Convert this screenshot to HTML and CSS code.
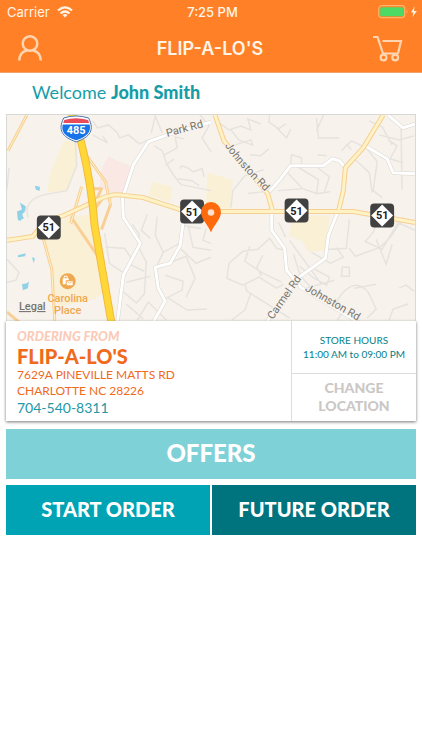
FILE: index.html
```html
<!DOCTYPE html>
<html lang="en">
<head>
<meta charset="utf-8">
<meta name="viewport" content="width=device-width, initial-scale=1">
<title>FLIP-A-LO'S</title>
<link rel="stylesheet" href="styles.css">
</head>
<body>
<header class="top">
  <div class="status">
    <div class="carrier"><span>Carrier</span>
      <svg width="16" height="12" viewBox="0 0 16 12" fill="none" stroke="#fff4e6" stroke-width="2.300"><path d="M1 4.500Q8-1.800 15 4.500M3.500 7.500Q8 3.500 12.500 7.500"/><path d="M5.500 9Q8 7 10.500 9L8 11.500Z" fill="#fff4e6" stroke="none"/></svg>
    </div>
    <span class="time">7:25 PM</span>
    <div class="battery">
      <svg width="40" height="14" viewBox="0 0 40 14"><rect x=".7" y=".7" width="26" height="12" rx="3" fill="none" stroke="#ffb36b" stroke-width="1.200"/><rect x="2.200" y="2.200" width="23" height="9" rx="1.500" fill="#4cd964"/><path d="M28.500 4.500Q30.500 6.700 28.500 9Z" fill="#ffb36b"/><path d="M36.500 1.500L33 7.500H35.500L34.500 12L38.800 6H36Z" fill="#fff4e6"/></svg>
    </div>
  </div>
  <nav class="bar">
    <button class="icon" aria-label="Account"><svg width="26" height="28" viewBox="0 0 26 28" fill="none" stroke="#ffd5b0" stroke-width="2.500"><circle cx="13" cy="9.500" r="7.300"/><path d="M2.200 26.500C2.500 20.500 6 17.300 10 16.500M16 16.500C20 17.300 23.500 20.500 23.800 26.500"/></svg></button>
    <h1>FLIP-A-LO'S</h1>
    <button class="icon" aria-label="Cart"><svg width="30" height="27" viewBox="0 0 30 27" fill="none" stroke="#ffd5b0" stroke-width="2.200"><path d="M0 2H4.500L10 18.500H25M9.500 6H28L25 18.500"/><circle cx="10.500" cy="22.500" r="2.900"/><circle cx="22.200" cy="22.500" r="2.900"/></svg></button>
  </nav>
</header>
<main>
  <p class="welcome">Welcome <strong>John Smith</strong></p>
  <section class="store">
    <svg class="map" viewBox="6 114 410 207" preserveAspectRatio="xMidYMid slice" role="img" aria-label="Store map">
      <defs>
        <g id="shield"><rect x="-12" y="-12" width="24" height="24" rx="4" fill="#414141"/><path d="M0-11L11 0L0 11L-11 0Z" fill="#fff"/><text y="4" text-anchor="middle" class="num">51</text></g>
        <path id="johnston" d="M225 145Q237 164 272 197"/>
      </defs>
      <rect x="6" y="114" width="410" height="207" fill="#f7f3ec"/>
      <g fill="#faf0d6">
        <path d="M63 140L76 141L77 164L66 190L46 192L50 171Z"/>
        <path d="M41 236L66 217L89 214L103 292L94 299L57 307L50 270Z"/>
        <path d="M152 181L172 186L170 201L148 195Z"/>
        <path d="M207 172L233 179L230 208L206 209Z"/>
        <path d="M294 215H330L327 250L309 252L303 241L289 235Z"/>
      </g>
      <path d="M108 156L132 166L121 196L99 187L101 168Z" fill="#fae8e5"/>
      <g fill="#8fd2e8"><path d="M34 185l5 1v4l-4-1z"/><path d="M19 202l6 4-1 5-3 3 2 4-6 2-1-9 5-2z"/><path d="M17 215l4-2 1 4-3 4z"/><path d="M17 255l8-2-1 3-7 1zM31 257l3 1-1 5zM21 284l5-1 2-2-1 7-5 2z"/></g>
      <g class="streets">
        <path d="M92 120L97 127L108 124L117 132L119 137L128 134L139 143L148 139M92 134L107 142L102 135"/>
        <path d="M70 116L75 145L76 165L66 190L44 194Q27 198 26 210L27 217M6 188L8 167M6 259L18 272L15 280L6 282"/>
        <path d="M151 132L155 115L162 132M154 145L162 150L166 162L173 174L181 184L211 190M164 154L177 147L175 136L184 138M181 168Q179 163 187 167L193 171L202 168L204 176M178 178L192 180L199 185M200 114L209 125L202 137L211 151M165 165L174 158"/>
        <path d="M218 121L229 129L241 125L251 129L248 118L261 123M231 129L239 139L252 144M270 114L269 121L279 128L286 123M229 146L251 139L253 145M250 154L261 155L269 148M277 127L287 137L291 128M317 117L319 137L340 137M324 114L317 130M231 207L233 190L245 175L264 169M248 193L264 191"/>
        <path d="M291 164L292 154L302 157L302 164M288 172L303 188L318 193L331 191M296 165L319 179L317 194M318 154L327 155M318 167L330 176L325 191M278 190L302 188M342 150L352 140L367 147L378 161L374 190L383 197M355 158L370 172L373 192M389 139L398 145L391 158L404 162M402 128L403 189M380 134L400 139L415 135M370 120L383 126L393 144M352 149L347 143"/>
        <path d="M104 233L109 263L122 272M132 224L139 234L137 248M147 214L141 230L150 238M157 216L155 235L163 252L181 242M182 225L201 228M163 252L157 265M139 248L146 262L144 294L136 303L122 291M105 247L124 248L131 258M129 264L144 271M126 282L150 276M166 264L186 256L195 278L186 297M181 249L196 263L211 257M165 275L183 281L182 290L164 299M168 298L187 310L207 309M137 320L148 302L166 320M126 304L143 319M188 225L193 247L211 250M206 228L203 240L211 243M192 220L203 218"/>
        <path d="M243 251L229 263L227 278L243 285L259 277L277 288L284 284M243 251L258 249L270 238L277 248L285 250M250 246L245 261L263 273L282 282M263 255L257 267L262 276M245 283L247 291L290 318M251 293L245 310L232 320M290 240L303 258L322 284M286 237L279 222M294 254L301 276L314 290M300 266L313 277L327 285L330 277L315 269M307 288L335 280M312 252L331 263L344 257L337 247M343 267L350 267V276H342zM350 219L347 248L329 249M350 248L356 256L381 247L392 236L404 217M379 218L374 232L366 241L383 249L399 222L416 230M377 239L387 264L393 244M356 320L339 309L338 300Q354 275 369 292L377 309L368 318M355 288L377 284M338 320L346 308M390 320L394 309L409 304M400 288L407 285L415 291"/>
      </g>
      <g class="casing orange"><path d="M84 152L105 181L110 204L101 229M81 186L70 223M91 188H101L94 203M70 216L100 260"/><path d="M26 114L7 150M41 233L51 269L54 321M6 312L18 322M93 210L102 198"/></g>
      <g class="core yellow"><path d="M84 152L105 181L110 204M81 186L70 223M26 114L7 150M41 233L51 269L54 321"/></g>
      <g class="casing white"><path d="M211 121L167 134L148 141L133 164L122 198L123 217L140 243L123 275L120 298L117 322M183 222L180 245L170 263L155 267L158 288L165 301L153 322M272 208V230L285 248L287 270L301 287L362 324M339 210L329 235L326 258L298 278L267 322M268 193L281 178L291 165L324 165L333 158L340 160L346 167M366 145L388 158L394 172L416 173M389 114L404 127L416 123"/></g>
      <g class="core white-core"><path d="M211 121L167 134L148 141L133 164L122 198L123 217L140 243L123 275L120 298L117 322M183 222L180 245L170 263L155 267L158 288L165 301L153 322M272 208V230L285 248L287 270L301 287L362 324M339 210L329 235L326 258L298 278L267 322M268 193L281 178L291 165L324 165L333 158L340 160L346 167M366 145L388 158L394 172L416 173M389 114L404 127L416 123"/></g>
      <path class="artery-edge" d="M6 240L32 236L43 222L63 215L98 199Q112 192 125 195L143 197L180 209L211 211H354L416 222M215 114L224 140L268 193L273 211M384 114L364 147L346 167L344 190L339 211"/>
      <path class="artery" d="M6 240L32 236L43 222L63 215L98 199Q112 192 125 195L143 197L180 209L211 211H354L416 222M215 114L224 140L268 193L273 211M384 114L364 147L346 167L344 190L339 211"/>
      <path class="freeway-edge" d="M71 112L81 143Q91 184 94 225L111 323"/>
      <path class="freeway" d="M71 112L81 143Q91 184 94 225L111 323"/>
      <g class="road-name">
        <text transform="translate(167 136) rotate(-15)">Park Rd</text>
        <text><textPath href="#johnston">Johnston Rd</textPath></text>
        <text transform="translate(273 320) rotate(-55)">Carmel Rd</text>
        <text transform="translate(305 290) rotate(30)">Johnston Rd</text>
      </g>
      <g class="place"><circle cx="67" cy="281" r="8"/><text x="67" y="302" text-anchor="middle">Carolina</text><text x="67" y="314" text-anchor="middle">Place</text><path d="M62 278h6v2h-3v4h-3zM66 281h6v4h-6z" fill="#fff"/><path d="M63.500 278v-2h3v2M66 281l3 2 3-2" fill="none" stroke="#fff"/><path d="M66 281l3 2 3-2" fill="none" stroke="#f0a84e" stroke-width=".7"/></g>
      <text class="legal" x="18" y="310">Legal</text>
      <g>
        <path d="M63 117Q75 113 88 117C94 129 90 136 75.500 141C61 136 57 129 63 117Z" fill="#fff" stroke="#4b74ad"/>
        <path d="M63.500 119Q75 115.500 87.500 119L88.500 122H62.500Z" fill="#e94b5b"/>
        <path d="M62 123.500H89C91 131 86 136 75.500 139.500C65 136 60 131 62 123.500Z" fill="#1773e8"/>
        <text x="75.500" y="133.500" text-anchor="middle" class="num interstate">485</text>
      </g>
      <use href="#shield" x="48" y="227"/><use href="#shield" x="192" y="211"/><use href="#shield" x="297" y="210"/><use href="#shield" x="383" y="215"/>
      <path d="M211 232C208 224 201 219 201 211.500A10 10 0 0 1 221 211.500C221 219 214 224 211 232Z" fill="#ff6a0d"/><circle cx="211" cy="212" r="3.300" fill="#ffe1cc"/>
    </svg>
    <div class="card">
      <div class="info">
        <p class="from">ORDERING FROM</p>
        <h2>FLIP-A-LO'S</h2>
        <address>7629A PINEVILLE MATTS RD<br>CHARLOTTE NC 28226</address>
        <a class="phone" href="tel:7045408311">704-540-8311</a>
      </div>
      <div class="side">
        <p class="hours">STORE HOURS<br>11:00 AM to 09:00 PM</p>
        <button class="change">CHANGE<br>LOCATION</button>
      </div>
    </div>
  </section>
  <div class="actions">
    <button class="offers">OFFERS</button>
    <button class="start">START ORDER</button>
    <button class="future">FUTURE ORDER</button>
  </div>
</main>
</body>
</html>
```
FILE: styles.css
```css
* { box-sizing: border-box; }
body { margin: 0; background: #fff; font-family: Lato, "Liberation Sans", sans-serif; }
h1, h2, p { margin: 0; }
button { border: 0; padding: 0; background: none; font-family: inherit; cursor: pointer; }
svg { display: block; }

.top { background: #ff8026; color: #fff4e6; font-family: Inter, sans-serif; border-bottom: 1px solid #f3a269; }
.status { display: grid; grid-template-columns: 1fr auto 1fr; align-items: center; height: 24px; padding: 0 4px 0 7px; font-size: 13px; }
.carrier { display: flex; align-items: center; gap: 7px; }
.time { font-weight: 500; }
.battery { display: flex; justify-content: flex-end; }
.bar { display: grid; grid-template-columns: 1fr auto 1fr; align-items: center; height: 48px; padding: 0 19px 0 17px; }
.bar h1 { font-size: 18px; font-weight: 600; }
.icon { justify-self: start; }
.icon:last-child { justify-self: end; }

.welcome { padding: 7px 32px 0; height: 41px; line-height: 25px; font-size: 18px; color: #169da8; }
.welcome strong { font-weight: 900; }

.store { margin: 0 6px; }
.map { width: 100%; height: auto; border: 1px solid #d8d8d5; border-bottom: 0; }
.streets path { fill: none; stroke: #e6e3df; stroke-width: 1.5; }
.casing, .core, .artery, .artery-edge, .freeway, .freeway-edge { fill: none; stroke-linejoin: round; }
.orange { stroke: #f8cf95; stroke-width: 3; }
.yellow { stroke: #fff2c8; stroke-width: 1; }
.white { stroke: #d9d6d1; stroke-width: 4; }
.white-core { stroke: #fff; stroke-width: 3; }
.artery-edge { stroke: #f6cf92; stroke-width: 5; }
.artery { stroke: #fff2c5; stroke-width: 3; }
.freeway-edge { stroke: #f4b940; stroke-width: 8; }
.freeway { stroke: #ffd737; stroke-width: 6; }
.road-name, .place, .legal, .num { font-family: Roboto, sans-serif; }
.road-name { font-size: 11px; fill: #77736f; stroke: #f7f3ec; stroke-width: 2; paint-order: stroke; }
.place { font-size: 11px; font-weight: 500; fill: #f0a84e; }
.legal { font-size: 11px; font-weight: 500; fill: #77736f; text-decoration: underline; }
.num { font-size: 11px; font-weight: 700; fill: #222; }
.interstate { fill: #fff; }

.card { display: grid; grid-template-columns: 1fr 125px; min-height: 100px; background: #fff; box-shadow: 0 1px 3px #777; position: relative; }
.info { padding: 7px 11px 4px; color: #ef6a1c; }
.from { font-size: 13px; line-height: 17px; font-weight: 900; font-style: italic; color: #fbcbb8; }
.info h2 { font-size: 20px; line-height: 22px; font-weight: 900; }
.info address { font-size: 12px; line-height: 16px; font-style: normal; }
.phone { display: block; font-size: 14px; line-height: 18px; color: #2398a8; text-decoration: none; }
.side { display: grid; grid-template-rows: 1fr 48px; border-left: 1px solid #ddd; }
.hours { align-self: center; text-align: center; font-size: 10px; line-height: 14px; color: #087e88; }
.change { border-top: 1px solid #ddd; font-size: 14px; line-height: 18px; font-weight: 900; color: #cbc7c5; }

.actions { display: grid; grid-template-columns: 1fr 1fr; gap: 6px 2px; margin: 8px 6px; }
.actions button { height: 50px; padding-bottom: 2px; color: #fff; font-size: 20px; font-weight: 900; }
.actions .offers { grid-column: 1 / -1; background: #7fd1d8; font-size: 24px; }
.actions .start { background: #00a3b4; }
.actions .future { background: #00747e; }
```
